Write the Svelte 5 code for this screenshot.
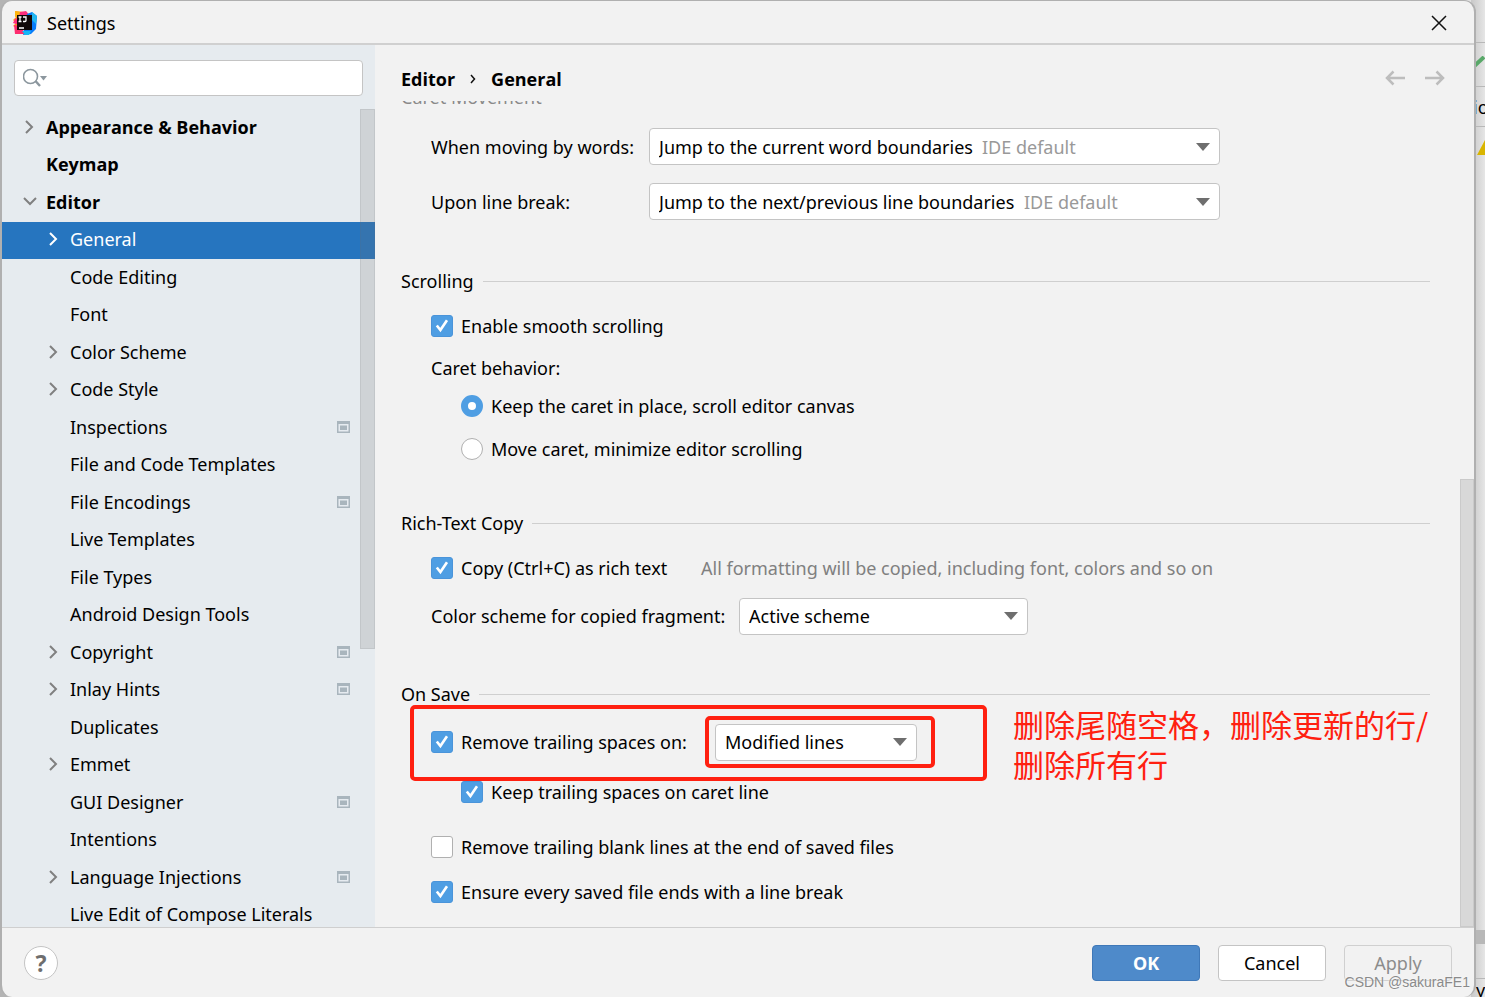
<script>
  const tree = [
    { label: 'Appearance & Behavior', level: 0, state: 'closed' },
    { label: 'Keymap', level: 0 },
    { label: 'Editor', level: 0, state: 'open' },
    { label: 'General', level: 1, state: 'closed', selected: true },
    { label: 'Code Editing', level: 1 },
    { label: 'Font', level: 1 },
    { label: 'Color Scheme', level: 1, state: 'closed' },
    { label: 'Code Style', level: 1, state: 'closed' },
    { label: 'Inspections', level: 1, project: true },
    { label: 'File and Code Templates', level: 1 },
    { label: 'File Encodings', level: 1, project: true },
    { label: 'Live Templates', level: 1 },
    { label: 'File Types', level: 1 },
    { label: 'Android Design Tools', level: 1 },
    { label: 'Copyright', level: 1, state: 'closed', project: true },
    { label: 'Inlay Hints', level: 1, state: 'closed', project: true },
    { label: 'Duplicates', level: 1 },
    { label: 'Emmet', level: 1, state: 'closed' },
    { label: 'GUI Designer', level: 1, project: true },
    { label: 'Intentions', level: 1 },
    { label: 'Language Injections', level: 1, state: 'closed', project: true },
    { label: 'Live Edit of Compose Literals', level: 1 }
  ];

  let query = $state('');
  let smooth = $state(true);
  let caret = $state('keep');
  let richText = $state(true);
  let trailing = $state(true);
  let keepCaretLine = $state(true);
  let blankLines = $state(false);
  let lineBreak = $state(true);
</script>

{#snippet check()}
  <svg class="tick" viewBox="0 0 22 22" aria-hidden="true"><path d="M5.800 10.500 9.400 15 16 5.200" /></svg>
{/snippet}

{#snippet arrow()}
  <svg class="arrow" width="14" height="8" viewBox="0 0 14 8" aria-hidden="true"><path d="M0 0h14L7 8z" fill="#6e6e6e" /></svg>
{/snippet}

<div class="desktop">
  <div class="behind" aria-hidden="true">
    <i class="rule" style:top="42px"></i>
    <i class="rule" style:top="86px"></i>
    <i class="rule" style:top="126px"></i>
    <svg class="ok-mark" width="12" height="16" viewBox="0 0 12 16"><path d="M-2 13 11 1" stroke="#59a869" stroke-width="4" fill="none" /></svg>
    <span class="peek tab">io</span>
    <svg class="warn" width="8" height="15" viewBox="0 0 8 15"><path d="M0 15 8 0v15z" fill="#d9b500" /></svg>
    <i class="band"></i>
    <i class="rule" style:top="978px"></i>
    <span class="peek status">y</span>
  </div>

  <div class="window">
    <header class="titlebar">
      <svg width="24" height="24" viewBox="0 0 24 24" aria-hidden="true">
        <path d="M2 0 11 1l4 5-7 13-8-4 3-3-3-3 3-3z" fill="#ff9419" />
        <path d="M7 1 13 0l5 6-12 8-6-2 2-4 3-1z" fill="#ff2d7c" />
        <path d="M2 0 7 1 6 5 2 6z" fill="#fdb60d" />
        <path d="M14 3 19 1l5 4-1 13-5 5-8 1z" fill="#087cfa" />
        <path d="M19 1 24 5l-1 8-4-4z" fill="#21b7f0" />
        <path d="M1 14 7 15l6 8-11 0z" fill="#fe2d6f" />
        <path d="M9 20h9l-2 4h-4z" fill="#14b8f5" />
        <path d="M4 4h15v15H4z" fill="#100808" />
        <path d="M5.500 6h3M7 6v4.500M5.500 10.500h3M10 6h3v3.500q0 1-1 1h-2M6 17h5" stroke="#fff" stroke-width="1.300" fill="none" />
      </svg>
      <h1>Settings</h1>
      <button class="close" aria-label="Close">
        <svg width="16" height="16" viewBox="0 0 16 16" aria-hidden="true"><path d="M1 1 15 15M15 1 1 15" stroke="#111" stroke-width="1.500" /></svg>
      </button>
    </header>

    <div class="body">
      <aside>
        <label class="search">
          <svg width="26" height="20" viewBox="0 0 26 20" aria-hidden="true">
            <circle cx="7.500" cy="8.500" r="7" stroke="#8c979e" stroke-width="1.600" fill="none" />
            <path d="M12.500 13 17 18" stroke="#8c979e" stroke-width="2.400" />
            <path d="M17 8h7l-3.500 4.500z" fill="#8c979e" />
          </svg>
          <input type="text" aria-label="Search settings" bind:value={query} />
        </label>

        <div class="tree-pane">
          <ul>
            {#each tree as node}
              <li class:child={node.level === 1} class:selected={node.selected}>
                <span class="chevron">
                  {#if node.state === 'closed'}
                    <svg width="12" height="14" viewBox="0 0 12 14" aria-hidden="true"><path d="M3 1 9 7 3 13" /></svg>
                  {:else if node.state === 'open'}
                    <svg width="14" height="12" viewBox="0 0 14 12" aria-hidden="true"><path d="M1 2 7 8 13 2" /></svg>
                  {/if}
                </span>
                <a href="#settings">{node.label}</a>
                {#if node.project}
                  <svg width="13" height="12" viewBox="0 0 13 12" aria-hidden="true">
                    <path d="M0 0h13v12H0z" fill="#a9b5bd" />
                    <path d="M1.500 3h10v7.500h-10z" fill="#e6ebf0" />
                    <path d="M3 4.500h7v4.500H3z" fill="#a9b5bd" />
                  </svg>
                {/if}
              </li>
            {/each}
          </ul>
          <div class="thumb tree-thumb"></div>
        </div>
      </aside>

      <main>
        <div class="crumbs">
          <nav aria-label="Breadcrumb">
            <b>Editor</b>
            <svg width="6" height="10" viewBox="0 0 6 10" aria-hidden="true"><path d="M1 1 4.500 5 1 9" stroke="#111" stroke-width="1.500" fill="none" /></svg>
            <b>General</b>
          </nav>
          <button aria-label="Back">
            <svg width="20" height="16" viewBox="0 0 20 16" aria-hidden="true"><path d="M20 8H2M8.500 1.500 2 8l6.500 6.500" /></svg>
          </button>
          <button aria-label="Forward">
            <svg width="20" height="16" viewBox="0 0 20 16" aria-hidden="true"><path d="M0 8h18M11.500 1.500 18 8l-6.500 6.500" /></svg>
          </button>
        </div>

        <div class="scroll">
          <section class="first">
            <h2 class="faded">Caret Movement</h2>
            <div class="pair">
              <label for="words">When moving by words:</label>
              <div class="combo wide">
                <select id="words"><option>Jump to the current word boundaries</option></select>
                <span class="default">IDE default</span>
                {@render arrow()}
              </div>
              <label for="break">Upon line break:</label>
              <div class="combo wide">
                <select id="break"><option>Jump to the next/previous line boundaries</option></select>
                <span class="default">IDE default</span>
                {@render arrow()}
              </div>
            </div>
          </section>

          <section>
            <h2>Scrolling</h2>
            <label class="row in1"><span class="box"><input type="checkbox" bind:checked={smooth} />{@render check()}</span>Enable smooth scrolling</label>
            <div class="row in1 caption">Caret behavior:</div>
            <label class="row in2 tight"><input type="radio" value="keep" bind:group={caret} />Keep the caret in place, scroll editor canvas</label>
            <label class="row in2 option"><input type="radio" value="move" bind:group={caret} />Move caret, minimize editor scrolling</label>
          </section>

          <section>
            <h2>Rich-Text Copy</h2>
            <div class="row in1">
              <label class="inline copy-label"><span class="box"><input type="checkbox" bind:checked={richText} />{@render check()}</span>Copy (Ctrl+C) as rich text</label>
              <span class="note">All formatting will be copied, including font, colors and so on</span>
            </div>
            <div class="row in1 tall">
              <label class="scheme-label" for="scheme">Color scheme for copied fragment:</label>
              <div class="combo medium">
                <select id="scheme"><option>Active scheme</option></select>
                {@render arrow()}
              </div>
            </div>
          </section>

          <section class="save">
            <h2>On Save</h2>
            <div class="row in1 tall">
              <label class="inline strip-label"><span class="box"><input type="checkbox" bind:checked={trailing} />{@render check()}</span>Remove trailing spaces on:</label>
              <div class="combo small">
                <select aria-label="Lines to strip"><option>Modified lines</option></select>
                {@render arrow()}
                <i class="frame inner"></i>
              </div>
              <i class="frame outer"></i>
              <p class="remark">删除尾随空格，删除更新的行/<br />删除所有行</p>
            </div>
            <label class="row in2"><span class="box"><input type="checkbox" bind:checked={keepCaretLine} />{@render check()}</span>Keep trailing spaces on caret line</label>
            <label class="row in1 apart"><span class="box"><input type="checkbox" bind:checked={blankLines} />{@render check()}</span>Remove trailing blank lines at the end of saved files</label>
            <label class="row in1"><span class="box"><input type="checkbox" bind:checked={lineBreak} />{@render check()}</span>Ensure every saved file ends with a line break</label>
          </section>
        </div>
        <div class="thumb main-thumb"></div>
      </main>
    </div>

    <footer>
      <button class="help" aria-label="Help">?</button>
      <button class="primary">OK</button>
      <button>Cancel</button>
      <button disabled>Apply</button>
      <span class="credit">CSDN @sakuraFE1</span>
    </footer>
  </div>
</div>

<style>
  :global(body) {
    margin: 0;
    background: #b4b4b4;
  }

  .desktop,
  .desktop * {
    box-sizing: border-box;
  }

  .desktop {
    position: relative;
    height: 100vh;
    padding-right: 9px;
    overflow: hidden;
    background: linear-gradient(90deg, #b4b4b4 50%, #e2e2e2 50%);
    font: 18px/28px 'Noto Sans', 'Open Sans', 'Noto Sans CJK SC', sans-serif;
    color: #000;
  }

  .behind {
    position: absolute;
    inset: 0 0 0 auto;
    width: 14px;
    overflow: hidden;
    background: linear-gradient(90deg, #c8c8c8, #e6e6e6);
  }

  .behind > * {
    position: absolute;
  }

  .rule {
    left: 0;
    width: 100%;
    height: 1px;
    background: #b8b8b8;
  }

  .ok-mark {
    right: 0;
    top: 56px;
  }

  .warn {
    right: 0;
    top: 140px;
  }

  .band {
    left: 0;
    top: 930px;
    width: 100%;
    height: 14px;
    background: #b8b8b8;
  }

  .peek {
    left: 2px;
  }

  .tab {
    top: 93px;
  }

  .status {
    left: 5px;
    top: 976px;
  }

  .window {
    position: relative;
    display: flex;
    flex-direction: column;
    height: 100%;
    overflow: hidden;
    border: 2px solid #b0b0b0;
    border-width: 1px 2px 0;
    border-radius: 12px;
    background: #f2f2f2;
  }

  .titlebar {
    display: flex;
    flex: none;
    align-items: center;
    gap: 10px;
    height: 44px;
    padding: 2px 19px 0 11px;
    border-bottom: 2px solid #d0d0d0;
  }

  h1 {
    flex: 1;
    margin: 0;
    font-size: 18px;
    font-weight: 400;
  }

  button {
    font: inherit;
    color: inherit;
  }

  .close,
  .crumbs button {
    display: flex;
    padding: 8px;
    border: 0;
    background: none;
  }

  .body {
    display: flex;
    flex: 1;
    min-height: 0;
  }

  aside {
    display: flex;
    flex: none;
    flex-direction: column;
    width: 373px;
    padding-top: 15px;
    background: #e6ebef;
  }

  .search {
    display: flex;
    flex: none;
    align-items: center;
    height: 36px;
    margin: 0 12px;
    padding-left: 8px;
    border: 1px solid #c4c4c4;
    border-radius: 4px;
    background: #fff;
  }

  .search input {
    flex: 1;
    min-width: 0;
    border: 0;
    outline: 0;
    background: none;
    font: inherit;
  }

  .tree-pane {
    position: relative;
    flex: 1;
    min-height: 0;
    margin-top: 13px;
    overflow: hidden;
  }

  ul {
    margin: 0;
    padding: 0;
    list-style: none;
  }

  li {
    display: flex;
    align-items: center;
    height: 37px;
    padding: 0 25px 3px 21px;
  }

  li:nth-child(odd) {
    height: 38px;
  }

  li:not(.child),
  b {
    font-family: 'Open Sans', sans-serif;
    font-weight: 700;
  }

  li.child {
    padding-left: 45px;
  }

  li.selected {
    background: #2675bf;
    color: #fff;
  }

  .chevron {
    display: flex;
    flex: none;
    width: 23px;
  }

  .chevron path {
    fill: none;
    stroke: #808080;
    stroke-width: 2;
  }

  .selected .chevron path {
    stroke: #fff;
  }

  a {
    flex: 1;
    color: inherit;
    text-decoration: none;
    white-space: nowrap;
  }

  .thumb {
    position: absolute;
    right: 0;
    width: 15px;
    border: 1px solid rgba(110, 110, 110, 0.12);
    background: rgba(115, 115, 115, 0.2);
  }

  .tree-thumb {
    top: 0;
    height: 66%;
  }

  .main-thumb {
    top: 434px;
    bottom: 0;
    width: 14px;
  }

  main {
    position: relative;
    display: flex;
    flex: 1;
    flex-direction: column;
    min-width: 0;
  }

  .crumbs {
    display: flex;
    flex: none;
    align-items: center;
    gap: 4px;
    height: 56px;
    padding: 10px 21px 0 26px;
  }

  nav {
    display: flex;
    flex: 1;
    align-items: center;
    gap: 15px;
    padding-top: 2px;
  }

  .crumbs button path {
    fill: none;
    stroke: #bdbdbd;
    stroke-width: 2.5;
  }

  .scroll {
    flex: 1;
    min-height: 0;
    padding: 0 44px 0 26px;
    overflow: hidden;
    white-space: nowrap;
  }

  section {
    margin-top: 46px;
  }

  section.first {
    margin-top: -18px;
  }

  section.save {
    margin-top: 45px;
  }

  h2 {
    display: flex;
    align-items: center;
    gap: 9px;
    margin: 0;
    font-size: 18px;
    font-weight: 400;
    line-height: 28px;
  }

  h2::after {
    flex: 1;
    height: 1px;
    background: #cfcfcf;
    content: '';
  }

  h2.faded {
    color: #8a8a8a;
  }

  h2.faded::after {
    display: none;
  }

  .pair {
    display: grid;
    grid-template-columns: 209px auto;
    justify-content: start;
    align-items: center;
    gap: 18px 9px;
    padding: 17px 0 1px 30px;
  }

  .combo {
    position: relative;
    display: flex;
    align-items: center;
    height: 37px;
    padding: 0 9px;
    border: 1px solid #c4c4c4;
    border-radius: 4px;
    background: #fff;
  }

  .wide {
    width: 571px;
  }

  .medium {
    width: 289px;
  }

  .small {
    width: 202px;
  }

  select {
    padding: 0;
    border: 0;
    outline: 0;
    background: none;
    color: inherit;
    font: inherit;
    appearance: none;
  }

  .default {
    margin-left: 9px;
    color: #999;
  }

  .arrow {
    margin-left: auto;
  }

  .row {
    position: relative;
    display: flex;
    align-items: center;
    gap: 8px;
    width: max-content;
    height: 28px;
    margin-top: 17px;
  }

  .inline {
    display: flex;
    align-items: center;
    gap: 8px;
  }

  .copy-label {
    min-width: 246px;
  }

  .scheme-label {
    min-width: 300px;
  }

  .strip-label {
    min-width: 276px;
  }

  .in1 {
    margin-left: 30px;
  }

  .in2 {
    margin-left: 60px;
  }

  .caption {
    margin-top: 14px;
  }

  .tight {
    margin-top: 10px;
  }

  .option {
    margin-top: 15px;
  }

  .apart {
    margin-top: 27px;
  }

  .tall {
    height: 38px;
    margin-top: 15px;
  }

  .note {
    margin-left: 16px;
    color: #808080;
  }

  .box {
    display: grid;
    width: 22px;
    height: 22px;
  }

  .box > :global(*) {
    grid-area: 1 / 1;
  }

  input[type='checkbox'],
  input[type='radio'] {
    width: 22px;
    height: 22px;
    margin: 0;
    border: 1px solid #b0b0b0;
    border-radius: 3px;
    background: #fff;
    appearance: none;
  }

  input[type='radio'] {
    border-radius: 50%;
  }

  input[type='checkbox']:checked {
    border-color: #4a94da;
    background: #4f9ee3;
  }

  input[type='radio']:checked {
    border: 7px solid #4f9ee3;
  }

  .tick {
    width: 22px;
    height: 22px;
    pointer-events: none;
  }

  .tick path {
    fill: none;
    stroke: #fff;
    stroke-width: 2.6;
  }

  .frame {
    position: absolute;
    border: 4px solid #ff2010;
    border-radius: 5px;
    pointer-events: none;
  }

  .frame.inner {
    inset: -9px -19px -8px -11px;
  }

  .frame.outer {
    inset: -18px -70px -20px -21px;
  }

  .remark {
    position: absolute;
    left: calc(100% + 96px);
    top: -19px;
    margin: 0;
    color: #ff2010;
    font: 400 31px/40px 'Noto Sans CJK SC', sans-serif;
  }

  footer {
    position: relative;
    display: flex;
    flex: none;
    align-items: center;
    gap: 18px;
    height: 70px;
    padding: 0 22px;
    border-top: 1px solid #cfcfcf;
  }

  footer button {
    width: 108px;
    height: 36px;
    padding: 0;
    border: 1px solid #c4c4c4;
    border-radius: 4px;
    background: #fff;
  }

  footer .primary {
    border-color: #3f78b8;
    background: #4e8aca;
    color: #fff;
    font-weight: 700;
  }

  footer button:disabled {
    border-color: #d0d0d0;
    background: none;
    color: #8c8c8c;
  }

  footer .help {
    width: 34px;
    height: 34px;
    margin-right: auto;
    border-radius: 50%;
    color: #6e6e6e;
    font-size: 23px;
    font-weight: 700;
  }

  .credit {
    position: absolute;
    right: 4px;
    bottom: 6px;
    color: #8a8a8a;
    font: 14px/18px 'Liberation Sans', sans-serif;
    text-shadow: 0 0 2px #fff;
  }
</style>
